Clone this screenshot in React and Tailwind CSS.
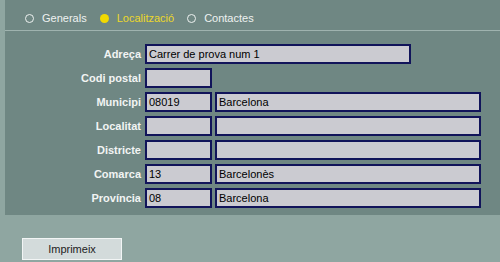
import React from 'react';

const font = { fontFamily: '"Liberation Sans", Arial, sans-serif' };

const tabs = [
  { label: 'Generals', active: false },
  { label: 'Localització', active: true },
  { label: 'Contactes', active: false },
];

// each row: label + one or two fields
const rows = [
  { label: 'Adreça', fields: [{ value: 'Carrer de prova num 1', wide: 'w-[266px]' }] },
  { label: 'Codi postal', fields: [{ value: '', wide: 'w-[67px]' }] },
  { label: 'Municipi', fields: [{ value: '08019', wide: 'w-[67px]' }, { value: 'Barcelona', wide: 'w-[266px]' }] },
  { label: 'Localitat', fields: [{ value: '', wide: 'w-[67px]' }, { value: '', wide: 'w-[266px]' }] },
  { label: 'Districte', fields: [{ value: '', wide: 'w-[67px]' }, { value: '', wide: 'w-[266px]' }] },
  { label: 'Comarca', fields: [{ value: '13', wide: 'w-[67px]' }, { value: 'Barcelonès', wide: 'w-[266px]' }] },
  { label: 'Província', fields: [{ value: '08', wide: 'w-[67px]' }, { value: 'Barcelona', wide: 'w-[266px]' }] },
];

const Field = ({ value, wide }) => (
  <div
    className={`${wide} h-[20px] bg-[#cbcbd1] border-2 border-[#11145a] pl-[2px] flex items-center text-[11px] text-black leading-none`}
  >
    {value}
  </div>
);

export default function App() {
  return (
    <div className="w-[500px] h-[262px] bg-[#8fa6a1] pl-[5px] overflow-hidden" style={font}>
      <div className="bg-[#6f8783] pb-[7px]">
        {/* Tabs */}
        <div className="h-[31px] pt-[7px] pl-[20px] flex items-center border-b border-[#9fb3af]">
          {tabs.map((t, i) => (
            <div key={t.label} className={`flex items-center gap-[8px] ${i > 0 ? 'ml-[13px]' : ''}`}>
              {t.active ? (
                <span className="w-[9px] h-[9px] rounded-full bg-[#f2d900]" />
              ) : (
                <span className="w-[9px] h-[9px] rounded-full border border-[#eef2f1]" />
              )}
              <span className={`text-[11px] ${t.active ? 'text-[#ecd82a]' : 'text-[#eef2f1]'}`}>
                {t.label}
              </span>
            </div>
          ))}
        </div>

        {/* Form */}
        <div className="pt-[13px] flex flex-col gap-[4px]">
          {rows.map((r) => (
            <div key={r.label} className="flex items-center">
              <div className="w-[140px] pr-[4px] text-right text-[11px] font-bold text-[#f2f4f3]">
                {r.label}
              </div>
              <div className="flex gap-[3px]">
                {r.fields.map((f, i) => (
                  <Field key={i} {...f} />
                ))}
              </div>
            </div>
          ))}
        </div>
      </div>

      <div className="pt-[21px] pl-[17px]">
        <button className="w-[100px] h-[22px] bg-[#d3dbdb] border border-[#f2f5f5] text-[11px] text-[#222]">
          Imprimeix
        </button>
      </div>
    </div>
  );
}
